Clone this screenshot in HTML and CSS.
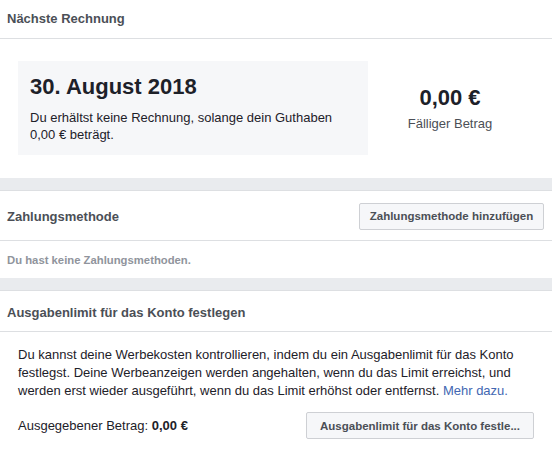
FILE: index.html
```html
<!DOCTYPE html>
<html lang="de">
<head>
<meta charset="utf-8">
<link rel="stylesheet" href="styles.css">
</head>
<body>
<div class="page">
  <section class="card">
    <div class="card-head first">Nächste Rechnung</div>
    <div class="invoice">
      <div class="invoice-box">
        <div class="invoice-date">30. August 2018</div>
        <div class="invoice-text">Du erhältst keine Rechnung, solange dein Guthaben<br>0,00 € beträgt.</div>
      </div>
      <div class="due">
        <div class="due-amount">0,00 €</div>
        <div class="due-label">Fälliger Betrag</div>
      </div>
    </div>
  </section>
  <div class="band"></div>
  <section class="card">
    <div class="card-head pay">
      <span>Zahlungsmethode</span>
      <button class="btn btn-add">Zahlungsmethode hinzufügen</button>
    </div>
    <div class="empty">Du hast keine Zahlungsmethoden.</div>
  </section>
  <div class="band"></div>
  <section class="card">
    <div class="card-head limit">Ausgabenlimit für das Konto festlegen</div>
    <div class="limit-body">
      <p class="limit-text">Du kannst deine Werbekosten kontrollieren, indem du ein Ausgabenlimit für das Konto festlegst. Deine Werbeanzeigen werden angehalten, wenn du das Limit erreichst, und werden erst wieder ausgeführt, wenn du das Limit erhöhst oder entfernst. <a class="link" href="#">Mehr dazu.</a></p>
      <div class="spent-row">
        <span class="spent">Ausgegebener Betrag: <b>0,00 €</b></span>
        <button class="btn btn-limit">Ausgabenlimit für das Konto festle...</button>
      </div>
    </div>
  </section>
</div>
</body>
</html>
```
FILE: styles.css
```css
* { box-sizing: border-box; }
html, body { margin: 0; padding: 0; background: #fff; }
body {
  font-family: "Liberation Sans", Arial, sans-serif;
  font-size: 13px;
  color: #1d2129;
}
.page { width: 552px; }
.card { background: #fff; }
.card-head {
  font-weight: bold;
  font-size: 13px;
  color: #4b4f56;
  padding: 0 7px;
  border-bottom: 1px solid #dddfe2;
  display: flex;
  align-items: center;
}
.card-head.first { height: 39px; padding-bottom: 2px; }
.card-head.pay { height: 50px; justify-content: space-between; padding-right: 8px; padding-top: 1px; }
.card-head.limit { height: 41px; padding-top: 2px; }
.invoice {
  display: flex;
  align-items: center;
  padding: 22px 20px 23px 18px;
}
.invoice-box {
  width: 350px;
  height: 94px;
  background: #f6f7f9;
  padding: 12px 10px 0 12px;
}
.invoice-date {
  font-size: 22px;
  font-weight: bold;
  line-height: 28px;
  color: #1d2129;
}
.invoice-text {
  margin-top: 8px;
  line-height: 17px;
  color: #1d2129;
  white-space: nowrap;
}
.due {
  flex: 1;
  text-align: center;
}
.due-amount {
  font-size: 22px;
  font-weight: bold;
  line-height: 26px;
}
.due-label {
  margin-top: 5px;
  color: #4b4f56;
  line-height: 16px;
}
.band {
  height: 13px;
  background: #e9ebee;
  border-bottom: 1px solid #dddfe2;
}
.btn {
  font-family: "Liberation Sans", Arial, sans-serif;
  font-weight: bold;
  font-size: 11.5px;
  color: #4b4f56;
  background: #f6f7f9;
  border: 1px solid #ced0d4;
  border-radius: 2px;
  height: 27px;
  white-space: nowrap;
}
.btn-add { width: 185px; padding: 0 6px; }
.empty {
  height: 37px;
  display: flex;
  align-items: center;
  padding: 0 7px;
  font-weight: bold;
  font-size: 11.3px;
  color: #90949c;
}
.limit-body { padding: 14px 20px 0 18px; }
.limit-text {
  margin: 0;
  line-height: 18px;
  color: #1d2129;
}
.link { color: #4267b2; text-decoration: none; }
.spent-row {
  display: flex;
  align-items: center;
  justify-content: space-between;
  margin-top: 12px;
  margin-right: -2px;
}
.spent { color: #1d2129; }
.btn-limit { width: 228px; padding: 0 8px; }
```
